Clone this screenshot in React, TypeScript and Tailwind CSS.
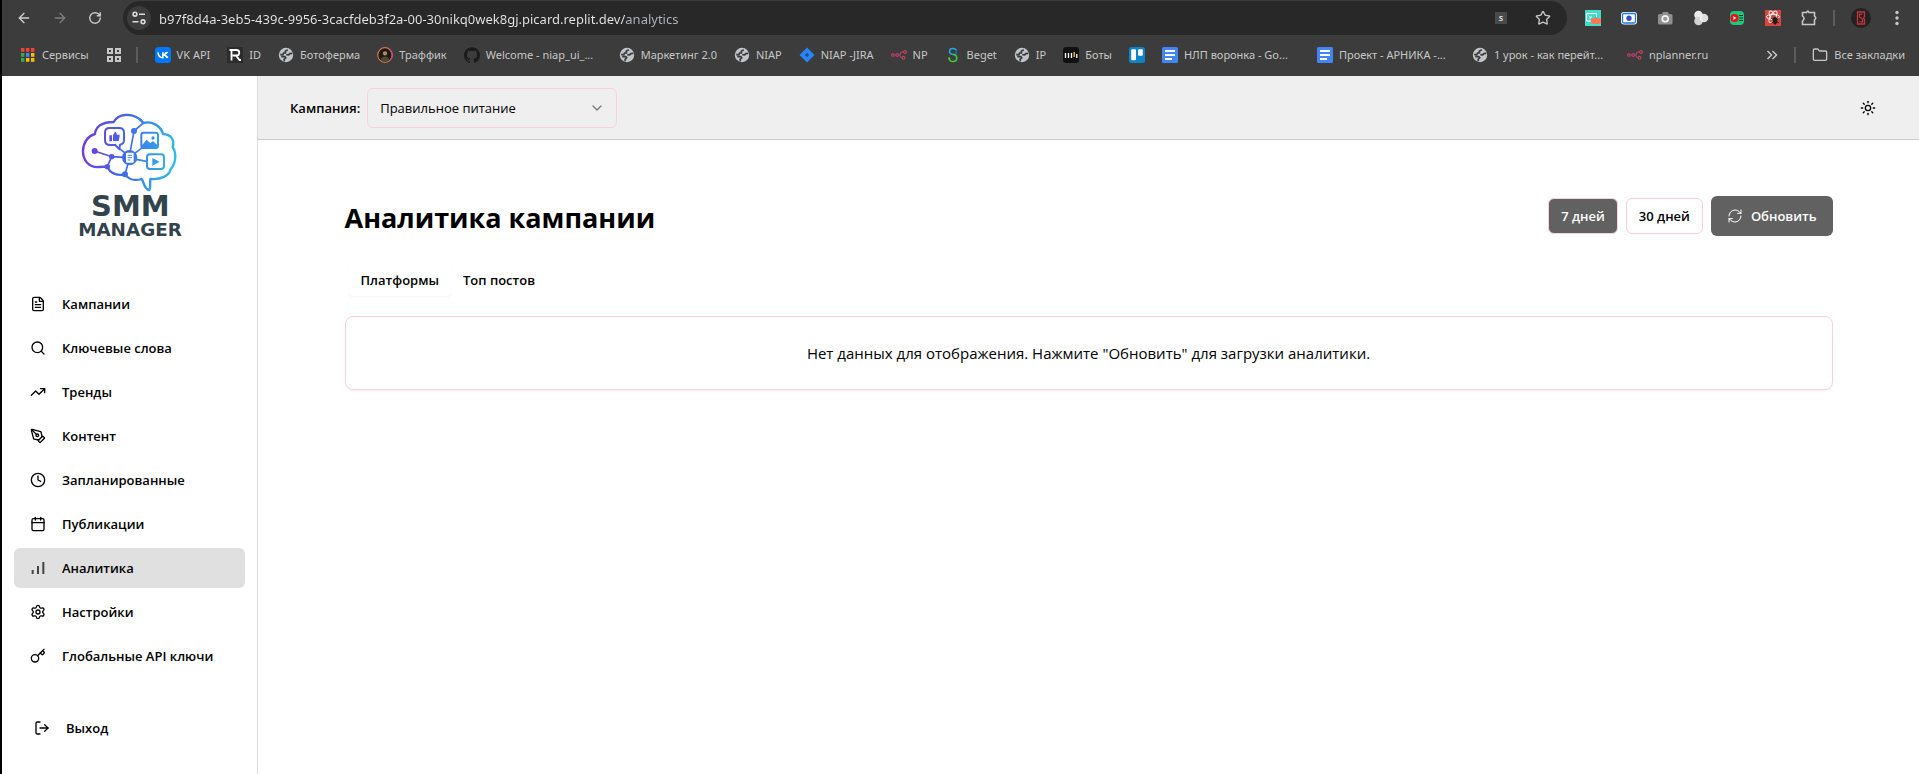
import { type ReactNode } from "react";
import {
  ArrowLeft,
  ArrowRight,
  Calendar,
  ChevronDown,
  Clock,
  FileText,
  Folder,
  Key,
  LogOut,
  PenTool,
  RefreshCw,
  RotateCw,
  Search,
  Settings,
  Star,
  Sun,
  TrendingUp,
} from "lucide-react";
import { SiGithub } from "react-icons/si";

function AppsIcon() {
  const colors = ["#f44336", "#f44336", "#f44336", "#34a853", "#4285f4", "#fbbc04", "#34a853", "#fbbc04", "#fbbc04"];
  return (
    <svg className="size-4" viewBox="0 0 16 16" aria-hidden="true">
      {colors.map((c, i) => (
        <rect key={i} x={1 + (i % 3) * 5} y={1 + Math.floor(i / 3) * 5} width="3.4" height="3.8" fill={c} />
      ))}
    </svg>
  );
}

function TabGroupIcon() {
  return (
    <svg className="size-4" viewBox="0 0 16 16" fill="none" stroke="#c7c7c7" strokeWidth="2" aria-hidden="true">
      <rect x="2" y="2" width="4" height="4" />
      <rect x="10" y="2" width="4" height="4" />
      <rect x="2" y="10" width="4" height="4" />
      <rect x="10" y="10" width="4" height="4" />
    </svg>
  );
}

function VkIcon() {
  return (
    <svg className="size-4" viewBox="0 0 16 16" aria-hidden="true">
      <rect width="16" height="16" rx="3.5" fill="#0077ff" />
      <path
        d="M3 5.2c.2 3.400 1.800 5.500 4.900 5.500V5.200M8 7.900c1.800-.2 2.600-1.300 3-2.700M8 7.800c1.900.3 3.200 1.300 3.900 2.900M9.300 7.900l3.300-2.700M9.500 7.900l3.500 2.800"
        fill="none"
        stroke="#fff"
        strokeWidth="1.500"
      />
    </svg>
  );
}

function LetterRIcon() {
  return (
    <svg className="size-4" viewBox="0 0 16 16" fill="none" stroke="#fff" strokeWidth="1.800" aria-hidden="true">
      <rect width="16" height="16" fill="#2b2b2b" stroke="none" />
      <path d="M2.500 3H9.500a2.500 2.500 0 0 1 0 5.500H5.500M4.500 3v10.500M9 8.500l3.500 4.500H14" />
    </svg>
  );
}

function GlobeIcon() {
  return (
    <svg className="size-4" viewBox="0 0 16 16" aria-hidden="true">
      <circle cx="8" cy="8" r="7.200" fill="#c3c4ca" />
      <path
        d="M9.800 2.800 7.200 4.200l.3 1.600-2 .2-.6 1.700H2.200M3.200 9.600h3.600l1 1.200-1.600 1.400v2M8.300 7.700l2.400.3 1-1.400 2.600-.2"
        fill="none"
        stroke="#3c3c3c"
        strokeWidth="1.700"
        strokeLinejoin="round"
      />
    </svg>
  );
}

function AvatarIcon() {
  return (
    <svg className="size-4" viewBox="0 0 16 16" aria-hidden="true">
      <circle cx="8" cy="8" r="7.300" fill="#1d1b16" stroke="#d9744f" strokeWidth="1.200" />
      <path d="M12 2.200a7.300 7.300 0 0 1 1.500 10.500" fill="none" stroke="#c2478f" strokeWidth="1.200" />
      <ellipse cx="8" cy="6" rx="2.200" ry="2.600" fill="#b58763" />
      <path d="M5.600 5c0-3 4.800-3 4.800 0-1.500-1-3.300-1-4.800 0Z" fill="#17120e" />
      <path d="M3.500 13c.8-3 2.500-3.500 4.500-3.500s3.700.5 4.500 3.500c-2.500 2-6.500 2-9 0Z" fill="#4a4933" />
    </svg>
  );
}

function JiraIcon() {
  return (
    <svg className="size-4" viewBox="0 0 16 16" aria-hidden="true">
      <path d="M8 .5 15.500 8 8 15.500.5 8Z" fill="#2684ff" />
      <path d="M8 5.700 10.300 8 8 10.300 5.700 8Z" fill="#2f4a75" />
    </svg>
  );
}

function NodesIcon() {
  return (
    <svg className="size-4" viewBox="0 0 16 16" fill="none" stroke="#b8425f" strokeWidth="1.200" aria-hidden="true">
      <circle cx="1.900" cy="8" r="1.300" />
      <circle cx="6.200" cy="8" r="1.300" />
      <circle cx="14" cy="5" r="1.400" />
      <circle cx="12.500" cy="10.800" r="1.400" />
      <path d="M3.200 8h1.700M7.500 8h1c1 0 .8-3 2.200-3h1.900M8.500 8c1.200 0 .6 2.800 2.500 2.800" />
    </svg>
  );
}

function BegetIcon() {
  return (
    <svg className="size-4" viewBox="0 0 16 16" fill="none" strokeWidth="1.600" aria-hidden="true">
      <path d="M11.500 3.500C10 .5 4.500 1 4.500 4.300c0 2 1.500 3 3.500 3.200" stroke="#22a7d8" />
      <path d="M8 7.500c2.200-.1 3.800-1.200 3.500-4" stroke="#1769b5" />
      <path d="M8 7.500c5 0 5 7 0 7-2.300 0-3.700-1.300-3.800-3.300" stroke="#43c83c" />
      <path d="M3.200 11.200h2" stroke="#43c83c" />
    </svg>
  );
}

function BotsIcon() {
  return (
    <svg className="size-4" viewBox="0 0 16 16" aria-hidden="true">
      <rect width="16" height="16" rx="3" fill="#111" />
      <path d="M2.500 6v5M5.500 6v5M8.500 6v5M13.800 7v4" stroke="#fff" strokeWidth="1.300" />
      <path d="M11.200 5v5" stroke="#f5b83d" strokeWidth="1.400" />
    </svg>
  );
}

function TrelloIcon() {
  return (
    <svg className="size-4" viewBox="0 0 16 16" aria-hidden="true">
      <rect width="16" height="16" rx="2.500" fill="#0d84c8" />
      <rect x="2.200" y="2.200" width="4.800" height="11" rx="1" fill="#fff" />
      <rect x="9" y="2.200" width="4.800" height="6.600" rx="1" fill="#fff" />
    </svg>
  );
}

function DocsIcon() {
  return (
    <svg className="size-4" viewBox="0 0 16 16" aria-hidden="true">
      <rect width="16" height="16" rx="1.500" fill="#4285f4" />
      <path d="M3 4h10M3 8h10M3 12h7" stroke="#fff" strokeWidth="1.900" />
    </svg>
  );
}

function Bookmark({ icon, label, title, clip }: { icon: ReactNode; label?: string; title?: string; clip?: boolean }) {
  return (
    <a href="#" aria-label={label ? undefined : title} className="flex shrink-0 items-center gap-1.5">
      {icon}
      {label && <span className={clip ? "w-[116px] whitespace-nowrap" : "whitespace-nowrap"}>{label}</span>}
    </a>
  );
}

function SiteInfoIcon() {
  return (
    <svg className="size-4" viewBox="0 0 16 16" fill="none" stroke="#dcdcdc" strokeWidth="1.600" aria-hidden="true">
      <circle cx="4" cy="4.200" r="1.900" />
      <path d="M8 4.200h6M1.500 11.800h6" />
      <circle cx="12" cy="11.800" r="1.900" />
    </svg>
  );
}

function Extensions() {
  return (
    <div className="flex items-center gap-5">
      <button aria-label="Снимок экрана">
        <svg className="size-4" viewBox="0 0 16 16" aria-hidden="true">
          <rect width="16" height="16" fill="#42dcc8" />
          <path d="M7 11H1.500V3.500h10V7" fill="none" stroke="#fff" />
          <path d="m3.500 5.500 2.500 2.500M6 6v2H4" fill="none" stroke="#fff" strokeWidth=".8" />
          <rect x="6" y="8" width="10" height="6" rx="2" fill="#ff7657" />
        </svg>
      </button>
      <button aria-label="Запись">
        <svg className="size-4" viewBox="0 0 16 16" aria-hidden="true">
          <rect y="2" width="16" height="12.500" rx="3" fill="#fff" />
          <rect x="1.500" y="3.500" width="13" height="9.500" rx="1.500" fill="#fff" stroke="#1b79ea" strokeWidth="1.300" />
          <circle cx="8" cy="8.200" r="2.600" fill="#3b46c8" />
        </svg>
      </button>
      <button aria-label="Камера">
        <svg className="size-4" viewBox="0 0 16 16" aria-hidden="true">
          <path d="M5 4 6 2h5l1 2h2q1.500 0 1.500 1.500v7.500q0 1.500-1.500 1.500H2.500Q1 14.500 1 13V5.500Q1 4 2.500 4Z" fill="#8f8f8f" />
          <circle cx="8.200" cy="8.800" r="3" fill="#999" stroke="#f4f4f4" strokeWidth="1.700" />
        </svg>
      </button>
      <button aria-label="Цвета">
        <svg className="size-4" viewBox="0 0 16 16" aria-hidden="true">
          <circle cx="5.500" cy="5" r="4.300" fill="#e9e9e9" />
          <circle cx="5.500" cy="11" r="4.300" fill="#d2d2d2" />
          <circle cx="11" cy="8" r="4.300" fill="#f1f1f1" fillOpacity=".9" />
        </svg>
      </button>
      <button aria-label="Видео">
        <svg className="size-4" viewBox="0 0 16 16" aria-hidden="true">
          <rect x="1" y="1" width="14" height="14" rx="4" fill="#1fc67d" />
          <circle cx="5.500" cy="8" r="4" fill="#f10d16" />
          <path d="m4.400 6 3 2-3 2Z" fill="#fff" />
          <path d="M10.200 5.500H14M10.200 8H14M10.200 10.500H14" stroke="#1c3327" strokeWidth="1.200" />
        </svg>
      </button>
      <button aria-label="Инструменты разработчика">
        <svg className="size-4" viewBox="0 0 16 16" aria-hidden="true">
          <rect width="16" height="16" fill="#d9463d" />
          <g fill="none" stroke="#fff" strokeWidth=".9">
            <ellipse cx="8" cy="6.800" rx="6.500" ry="2.500" />
            <ellipse cx="8" cy="6.800" rx="6.500" ry="2.500" transform="rotate(60 8 6.800)" />
            <ellipse cx="8" cy="6.800" rx="6.500" ry="2.500" transform="rotate(120 8 6.800)" />
          </g>
          <ellipse cx="10" cy="10.500" rx="2.600" ry="3.500" fill="#281b19" />
          <path d="m6 8 8 5M6.500 13l7-4.500M10 5.500V15" stroke="#281b19" />
        </svg>
      </button>
      <button aria-label="Расширения">
        <svg className="size-4" viewBox="0 0 16 16" fill="none" stroke="#c7c7c7" strokeWidth="1.600" aria-hidden="true">
          <path d="M1.500 2.500H5.600Q6.800-.3 8 2.500H13.500V6.200Q16 8 13.500 9.800V14.500H1.500V11Q4.600 8.500 1.500 6Z" />
        </svg>
      </button>
    </div>
  );
}

function BrowserChrome() {
  return (
    <header className="bg-[#3c3c3c] font-['Noto_Sans','Open_Sans',sans-serif] text-[#c7c7c7]">
      <div className="flex h-9 items-center pt-px pr-3 pb-px pl-3.5">
        <div className="flex items-center gap-5">
          <button aria-label="Назад" className="text-[#d0d0d0]">
            <ArrowLeft size={16} />
          </button>
          <button aria-label="Вперёд" className="text-[#7d7d7d]">
            <ArrowRight size={16} />
          </button>
          <button aria-label="Обновить страницу">
            <RotateCw size={14} strokeWidth={2.5} />
          </button>
        </div>
        <div className="ml-[21px] flex h-[34px] min-w-0 flex-1 items-center rounded-full bg-[#282828] pr-4 pl-1">
          <button aria-label="Сведения о сайте" className="mr-2 flex size-6 shrink-0 items-center justify-center rounded-full bg-[#3c3c3c]">
            <SiteInfoIcon />
          </button>
          <input
            aria-label="Адресная строка"
            defaultValue="b97f8d4a-3eb5-439c-9956-3cacfdeb3f2a-00-30nikq0wek8gj.picard.replit.dev/analytics"
            className="h-6 min-w-0 flex-1 bg-[linear-gradient(90deg,#e8e8e8_466px,#b4b6ba_466px)] bg-clip-text pt-0.5 text-[13px] leading-5 text-transparent outline-none"
          />
          <span className="mr-7 flex size-3 items-center justify-center bg-[#4a4a4a] text-[9px] font-semibold text-[#dcdcdc]">s</span>
          <button aria-label="Добавить в закладки">
            <Star size={16} />
          </button>
        </div>
        <div className="ml-[18px] flex items-center">
          <Extensions />
          <span className="mx-4 h-4 w-0.5 bg-[#5c5c5c]" />
          <button aria-label="Профиль" className="flex size-5 items-center justify-center rounded-full bg-[#222]">
            <svg className="size-3.5" viewBox="0 0 14 14" fill="none" stroke="#c4323a" strokeWidth="1.300" aria-hidden="true">
              <path d="M3.500 1H10.500V5.500L9.500 7l1 1.500V13h-7ZM8.500 3.200H5.500V6L8.500 8v2.800H5.500" />
            </svg>
          </button>
          <button aria-label="Меню браузера" className="ml-4">
            <svg className="size-5" viewBox="0 0 20 20" fill="#c7c7c7" aria-hidden="true">
              <circle cx="10" cy="4.500" r="1.700" />
              <circle cx="10" cy="10" r="1.700" />
              <circle cx="10" cy="15.500" r="1.700" />
            </svg>
          </button>
        </div>
      </div>
      <nav aria-label="Закладки" className="flex h-10 items-center gap-[17px] pr-3.5 pb-0.5 pl-[18px] text-[11px] leading-4">
        <Bookmark icon={<AppsIcon />} label="Сервисы" />
        <div className="flex items-center gap-3.5">
          <TabGroupIcon />
          <span className="h-4 w-0.5 bg-[#5c5c5c]" />
        </div>
        <Bookmark icon={<VkIcon />} label="VK API" />
        <Bookmark icon={<LetterRIcon />} label="ID" />
        <Bookmark icon={<GlobeIcon />} label="Ботоферма" />
        <Bookmark icon={<AvatarIcon />} label="Траффик" />
        <Bookmark icon={<SiGithub className="size-4 text-[#1b1b1b]" />} label="Welcome - niap_ui_..." clip />
        <Bookmark icon={<GlobeIcon />} label="Маркетинг 2.0" />
        <Bookmark icon={<GlobeIcon />} label="NIAP" />
        <Bookmark icon={<JiraIcon />} label="NIAP -JIRA" />
        <Bookmark icon={<NodesIcon />} label="NP" />
        <Bookmark icon={<BegetIcon />} label="Beget" />
        <Bookmark icon={<GlobeIcon />} label="IP" />
        <Bookmark icon={<BotsIcon />} label="Боты" />
        <Bookmark icon={<TrelloIcon />} title="Trello" />
        <Bookmark icon={<DocsIcon />} label="НЛП воронка - Go..." clip />
        <Bookmark icon={<DocsIcon />} label="Проект - АРНИКА -..." clip />
        <Bookmark icon={<GlobeIcon />} label="1 урок - как перейт..." clip />
        <Bookmark icon={<NodesIcon />} label="nplanner.ru" />
        <div className="ml-auto flex shrink-0 items-center gap-4">
          <button aria-label="Другие закладки">
            <svg className="size-3" viewBox="0 0 12 12" fill="none" stroke="#c7c7c7" strokeWidth="1.500" aria-hidden="true">
              <path d="m1.500 2 4 4-4 4M6.500 2l4 4-4 4" />
            </svg>
          </button>
          <span className="h-4 w-0.5 bg-[#5c5c5c]" />
          <Bookmark icon={<Folder size={16} />} label="Все закладки" />
        </div>
      </nav>
    </header>
  );
}

function Logo() {
  return (
    <svg className="h-[150px] w-[140px]" viewBox="0 0 420 450" role="img" aria-label="SMM Manager">
      <defs>
        <linearGradient id="brain" gradientUnits="userSpaceOnUse" x1="66" y1="150" x2="348" y2="190">
          <stop offset="0" stopColor="#7438dc" />
          <stop offset=".45" stopColor="#4169ec" />
          <stop offset="1" stopColor="#2cc0e8" />
        </linearGradient>
      </defs>
      <g fill="none" stroke="url(#brain)" strokeWidth="7" strokeLinecap="round" strokeLinejoin="round">
        <path d="M161 66C126 66 106 80 105 102C82 108 69 131 69 153C69 183 88 203 116 201L142 200C149 219 172 229 195 223C207 239 227 243 245 237C253 247 251 267 268 270C273 263 269 250 271 237C302 240 329 227 332 207C348 191 350 157 338 142C345 119 332 103 309 102C303 78 276 62 250 69C235 49 213 44 195 45C180 46 168 54 161 66Z" />
        <path d="M148 84H178Q192 84 192 98V120Q192 132 180 134L178 148L166 135H150Q135 135 135 120V98Q135 84 148 84Z" strokeWidth="6" />
        <rect x="244" y="98" width="50" height="46" rx="7" strokeWidth="6" />
        <rect x="261" y="163" width="51" height="44" rx="9" strokeWidth="6" />
        <path d="m104 153 51 17 40 2M142 200l13-30M250 69l-28 24-12 65M195 223l10-35M178 146l20 15M244 145l-20 15M228 178l32 6" strokeWidth="5" />
      </g>
      <g fill="url(#brain)">
        <circle cx="104" cy="153" r="9" />
        <circle cx="155" cy="170" r="8" />
        <circle cx="222" cy="93" r="9" />
        <circle cx="142" cy="200" r="8" />
        <circle cx="195" cy="223" r="9" />
        <circle cx="209" cy="173" r="23" />
        <path d="M148 106h8v18h-8ZM159 106l6-11q5 0 5 9h9v4l-3 15h-17Z" />
        <path d="M246 136 260 119l11 11 8-7 15 14v7h-48Z" />
        <circle cx="279" cy="114" r="5" />
        <path d="m277 174 22 11-22 12Z" />
      </g>
      <rect x="198" y="158" width="23" height="30" rx="3" fill="#fff" />
      <path d="M203 166h13M203 173h13M203 180h8" stroke="#3f7cf0" strokeWidth="3" />
      <g fill="#33434c" textAnchor="middle" fontWeight="700" className="font-['DejaVu_Sans',sans-serif]">
        <text x="211" y="348" fontSize="87">SMM</text>
        <text x="210" y="409" fontSize="55">MANAGER</text>
      </g>
    </svg>
  );
}

function BarsIcon() {
  return (
    <svg className="size-4" viewBox="0 0 24 24" fill="none" stroke="#444" strokeWidth="3" aria-hidden="true">
      <path d="M4 21v-6M12 21V9M20 21V3" />
    </svg>
  );
}

const navItems: { label: string; icon: ReactNode; active?: boolean }[] = [
  { label: "Кампании", icon: <FileText size={16} /> },
  { label: "Ключевые слова", icon: <Search size={16} /> },
  { label: "Тренды", icon: <TrendingUp size={16} /> },
  { label: "Контент", icon: <PenTool size={16} /> },
  { label: "Запланированные", icon: <Clock size={16} /> },
  { label: "Публикации", icon: <Calendar size={16} /> },
  { label: "Аналитика", icon: <BarsIcon />, active: true },
  { label: "Настройки", icon: <Settings size={16} /> },
  { label: "Глобальные API ключи", icon: <Key size={16} /> },
];

function Sidebar() {
  return (
    <aside className="w-64 shrink-0 border-r border-[#dcdcdc] px-3 pt-6">
      <div className="flex justify-center">
        <Logo />
      </div>
      <nav aria-label="Главное меню" className="mt-[34px] flex flex-col gap-1">
        {navItems.map((item) => (
          <a
            key={item.label}
            href="#"
            aria-current={item.active ? "page" : undefined}
            className={`flex h-10 items-center gap-4 rounded-md px-4 text-[13px] leading-5 font-semibold ${item.active ? "bg-[#e0e0e0]" : ""}`}
          >
            {item.icon}
            {item.label}
          </a>
        ))}
      </nav>
      <button className="mt-8 flex h-10 items-center gap-4 px-5 text-[13px] leading-5 font-semibold">
        <LogOut size={16} />
        Выход
      </button>
    </aside>
  );
}

export default function App() {
  return (
    <div className="flex min-h-screen flex-col border-l-2 border-black bg-white font-['Open_Sans','Noto_Sans',sans-serif] text-black">
      <BrowserChrome />
      <div className="flex flex-1">
        <Sidebar />
        <div className="min-w-0 flex-1">
          <div className="flex h-16 items-center border-b border-[#cccccc] bg-[#efefef] pr-[31px] pl-8 text-[13px] leading-5">
            <label htmlFor="campaign" className="mr-[7px] font-semibold">
              Кампания:
            </label>
            <div className="relative">
              <select
                id="campaign"
                className="h-10 w-[250px] appearance-none rounded-md border border-[#fbcfdc] bg-transparent px-3 pt-px outline-none"
              >
                <option>Правильное питание</option>
              </select>
              <ChevronDown size={16} className="pointer-events-none absolute top-3 right-3 text-[#777]" />
            </div>
            <button aria-label="Сменить тему" className="ml-auto flex size-10 items-center justify-center">
              <Sun size={16} />
            </button>
          </div>
          <main className="mx-auto max-w-[1536px] px-6 pt-14">
            <div className="flex h-10 items-center justify-between">
              <h1 className="pt-1 text-[27px] leading-9 font-bold">Аналитика кампании</h1>
              <div className="flex items-center gap-2 text-[13px] leading-5 font-semibold">
                <button className="h-9 rounded-md border border-[#fbcfdc] bg-[#616161] px-3 text-white">7 дней</button>
                <button className="h-9 rounded-md border border-[#fbcfdc] bg-white px-3">30 дней</button>
                <button className="flex h-10 items-center gap-2 rounded-md bg-[#616161] px-4 text-white">
                  <RefreshCw size={16} strokeWidth={1.5} />
                  Обновить
                </button>
              </div>
            </div>
            <div role="tablist" className="mt-6 flex h-10 items-center px-1 text-[13px] leading-5 font-semibold">
              <button role="tab" aria-selected="true" className="h-8 rounded-sm bg-white px-3 shadow-xs">
                Платформы
              </button>
              <button role="tab" aria-selected="false" className="h-8 px-3">
                Топ постов
              </button>
            </div>
            <section className="mt-4 rounded-lg border border-[#fbcfdc] p-6 text-center text-[15px] leading-6 shadow-xs">
              Нет данных для отображения. Нажмите "Обновить" для загрузки аналитики.
            </section>
          </main>
        </div>
      </div>
    </div>
  );
}
